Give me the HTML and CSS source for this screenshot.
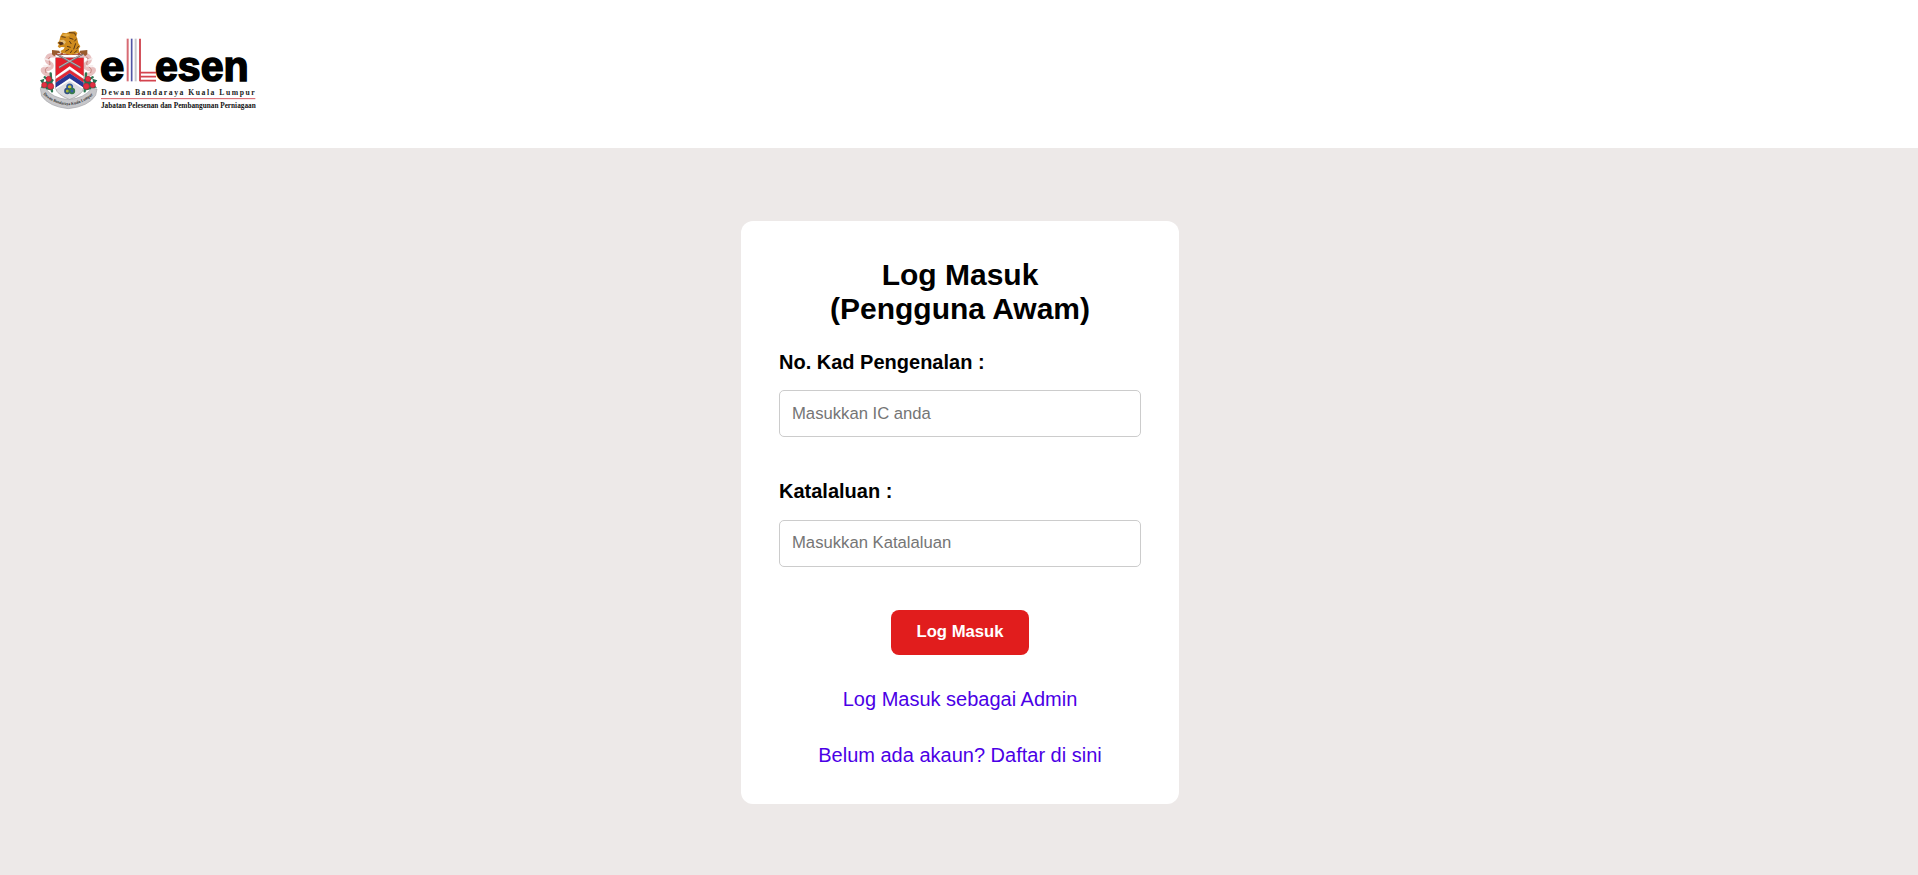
FILE: index.html
```html
<!DOCTYPE html>
<html lang="ms">
<head>
<meta charset="utf-8">
<title>eLesen - Log Masuk</title>
<link rel="stylesheet" href="styles.css">
</head>
<body>
<header class="header">
  <svg class="logo" viewBox="0 0 720 300" role="img" aria-label="eLesen">
    <!-- Crest: mantling and flowers -->
    <g fill="none" stroke-linecap="round">
      <path d="M72 106C48 104 46 122 60 130S56 150 43 148S48 168 60 164M158 106C182 104 184 122 170 130S174 150 187 148S182 168 170 164" stroke="#e8c0c0" stroke-width="13"/>
      <path d="M60 112C46 118 66 126 58 136S42 144 48 158M170 112C184 118 164 126 172 136S188 144 182 158" stroke="#c4827c" stroke-width="3"/>
      <path d="M56 120L44 116M60 138L42 138M174 120L186 116M170 138L188 138" stroke="#f6eaea" stroke-width="5"/>
      <path d="M62 160L66 214M168 160L164 214M44 172L60 182M188 172L170 182M40 202L64 208M192 202L166 208" stroke="#2e7650" stroke-width="7"/>
    </g>
    <!-- Shield -->
    <path d="M77 113H161V205Q158 223 119 239Q80 223 77 205Z" fill="#dcdce0" stroke="#999" stroke-width="2"/>
    <path d="M77 113H161V174L119 143L77 174Z" fill="#e51f2b"/>
    <path d="M77 169L119 139L161 169V176L119 146L77 176Z" fill="#fff"/>
    <path d="M77 177L119 149L161 177V188L119 160L77 188Z" fill="#df2936"/>
    <path d="M77 188L119 160L161 188V203L119 175L77 203Z" fill="#293995"/>
    <path d="M77 203L119 176L161 203V208L119 182L77 208Z" fill="#fff"/>
    <g fill="none" stroke-width="5">
      <circle cx="119" cy="201" r="8" stroke="#2e599d" fill="#d2c637"/>
      <circle cx="112" cy="213" r="7" stroke="#315181" fill="#a5b53a"/>
      <circle cx="126" cy="213" r="7" stroke="#367b48" fill="#385da5"/>
    </g>
    <!-- Crossed daggers -->
    <path d="M78 101L151 143M160 101L87 143" stroke="#77747a" stroke-width="6"/>
    <path d="M82 102L151 142M156 102L87 142" stroke="#d4d0cf" stroke-width="2"/>
    <path d="M66 90L88 92L91 101L78 102L73 109L66 103ZM172 90L150 92L147 101L160 102L165 109L172 103Z" fill="#9a5b2e"/>
    <path d="M82 98L150 98L156 105H76Z" fill="#a64d35"/>
    <path d="M82 101H152" stroke="#eee" stroke-width="3" stroke-dasharray="10 7"/>
    <!-- Tiger head -->
    <path d="M91 49L98 38L109 40L118 35L136 34L142 39L139 48L142 57L145 70L151 79L146 87L148 98L125 104L95 99L91 93L101 88L104 82L94 81L88 84L83 79L87 74L82 69L88 63Z" fill="#cf8b1d"/>
    <path d="M96 44L109 41L122 44L114 49L102 50Z" fill="#e4ad43"/>
    <path d="M94 50L107 52M117 38L134 39L137 47M118 54L130 58M140 56L133 64M118 63L124 72M111 79L122 82M137 70L131 88M146 78L140 87M117 88L106 94M142 91L133 98M126 91L121 99" fill="none" stroke="#563615" stroke-width="3"/>
    <path d="M88 61L101 59L108 66L102 74L92 73L94 67Z" fill="#e2bc78"/>
    <path d="M84 67L97 66L102 73L91 76Z" fill="#53301d"/>
    <!-- Roses -->
    <g fill="#257052">
      <path d="M30 181L43 176L40 190L62 174L72 180L64 190L73 207L58 200L48 212L47 199L31 205L38 193Z"/>
      <path d="M202 181L187 176L190 190L169 174L159 180L168 190L158 207L174 200L184 212L183 199L201 205L193 193Z"/>
    </g>
    <g fill="#e32f41" stroke="#ad2537" stroke-width="2">
      <circle cx="56" cy="177" r="8"/><circle cx="43" cy="195" r="8"/><circle cx="62" cy="199" r="9"/>
      <circle cx="174" cy="177" r="8"/><circle cx="188" cy="195" r="8"/><circle cx="169" cy="199" r="9"/>
    </g>
    <!-- Motto ribbon -->
    <path d="M31 206L46 205Q68 235 115 239Q163 235 185 205L201 207L197 226Q175 260 115 266Q57 260 35 228Z" fill="#c7c7ca" stroke="#a6a6aa" stroke-width="2"/>
    <path id="motto" d="M37 220Q66 252 116 256Q164 251 193 220" fill="none"/>
    <text class="logo-motto"><textPath href="#motto" startOffset="4" textLength="166" lengthAdjust="spacingAndGlyphs">Dewan Bandaraya Kuala Lumpur</textPath></text>
    <!-- Wordmark -->
    <text class="logo-word" x="210" y="184" textLength="73" lengthAdjust="spacingAndGlyphs">e</text>
    <text class="logo-word" x="375" y="184" textLength="281" lengthAdjust="spacingAndGlyphs">esen</text>
    <path d="M293 56V184" stroke="#d76b74" stroke-width="6"/>
    <path d="M305 56V184" stroke="#5355a5" stroke-width="5"/>
    <path d="M317 56V184" stroke="#c8c8ce" stroke-width="6"/>
    <path d="M330 56V184" stroke="#c92f3b" stroke-width="5"/>
    <path d="M330 158H378M330 170H378M330 182H378" stroke="#d4434e" stroke-width="5"/>
    <text class="logo-council" x="214" y="224" textLength="460">Dewan Bandaraya Kuala Lumpur</text>
    <path d="M213 236H676" stroke="#d65962" stroke-width="3"/>
    <text class="logo-department" x="213" y="263" textLength="464" lengthAdjust="spacingAndGlyphs">Jabatan Pelesenan dan Pembangunan Perniagaan</text>
  </svg>
</header>
<main class="main">
  <form class="card">
    <h1 class="title">Log Masuk<br>(Pengguna Awam)</h1>
    <label class="label label-first" for="ic">No. Kad Pengenalan :</label>
    <input class="input input-first" id="ic" type="text" placeholder="Masukkan IC anda">
    <label class="label" for="password">Katalaluan :</label>
    <input class="input" id="password" type="password" placeholder="Masukkan Katalaluan">
    <button class="button" type="button">Log Masuk</button>
    <a class="link" href="#">Log Masuk sebagai Admin</a>
    <a class="link" href="#">Belum ada akaun? Daftar di sini</a>
  </form>
</main>
</body>
</html>
```
FILE: styles.css
```css
* { box-sizing: border-box; }
body {
  margin: 0;
  min-height: 100vh;
  display: flex;
  flex-direction: column;
  background: #ede9e8;
  font-family: "Liberation Sans", Arial, sans-serif;
}
.header {
  height: 148px;
  padding: 20px 30px;
  background: #fff;
}
.logo { display: block; width: 240px; height: 100px; overflow: visible; }
.logo-word {
  font: bold 130px "Liberation Sans", Arial, sans-serif;
  stroke: #000;
  stroke-width: 5px;
}
.logo-council { font: bold 23px "Liberation Serif", serif; fill: #222; }
.logo-department { font: bold 27px "Liberation Serif", serif; fill: #111; }
.logo-motto { font: bold 13px "Liberation Serif", serif; fill: #333; }
.main {
  flex: 1;
  display: flex;
  justify-content: center;
  align-items: flex-start;
  padding-top: 73px;
}
.card {
  width: 438px;
  height: 583px;
  margin-left: 2px;
  padding: 37px 38px 0;
  display: flex;
  flex-direction: column;
  background: #fff;
  border-radius: 12px;
}
.title {
  margin: 0 0 24px;
  font-size: 30px;
  line-height: 34px;
  text-align: center;
}
.label {
  height: 23px;
  margin-bottom: 17px;
  font-size: 20px;
  font-weight: bold;
  line-height: 23px;
}
.label-first { margin: 1px 0 16px; }
.input {
  width: 100%;
  height: 47px;
  margin: 0 0 43px;
  padding: 0 12px 1px;
  border: 1px solid #ccc;
  border-radius: 5px;
  font: 16.667px "Liberation Sans", Arial, sans-serif;
}
.input-first { padding-bottom: 0; }
.input::placeholder { color: #757575; }
.button {
  align-self: center;
  width: 138px;
  height: 45px;
  margin: 0 0 33px;
  padding: 0 0 2px;
  border: 0;
  border-radius: 8px;
  background: #e11d1d;
  color: #fff;
  font: bold 16.667px "Liberation Sans", Arial, sans-serif;
}
.link {
  align-self: center;
  margin-bottom: 33px;
  color: #4b00e6;
  font-size: 20px;
  line-height: 23px;
  text-decoration: none;
}
```
